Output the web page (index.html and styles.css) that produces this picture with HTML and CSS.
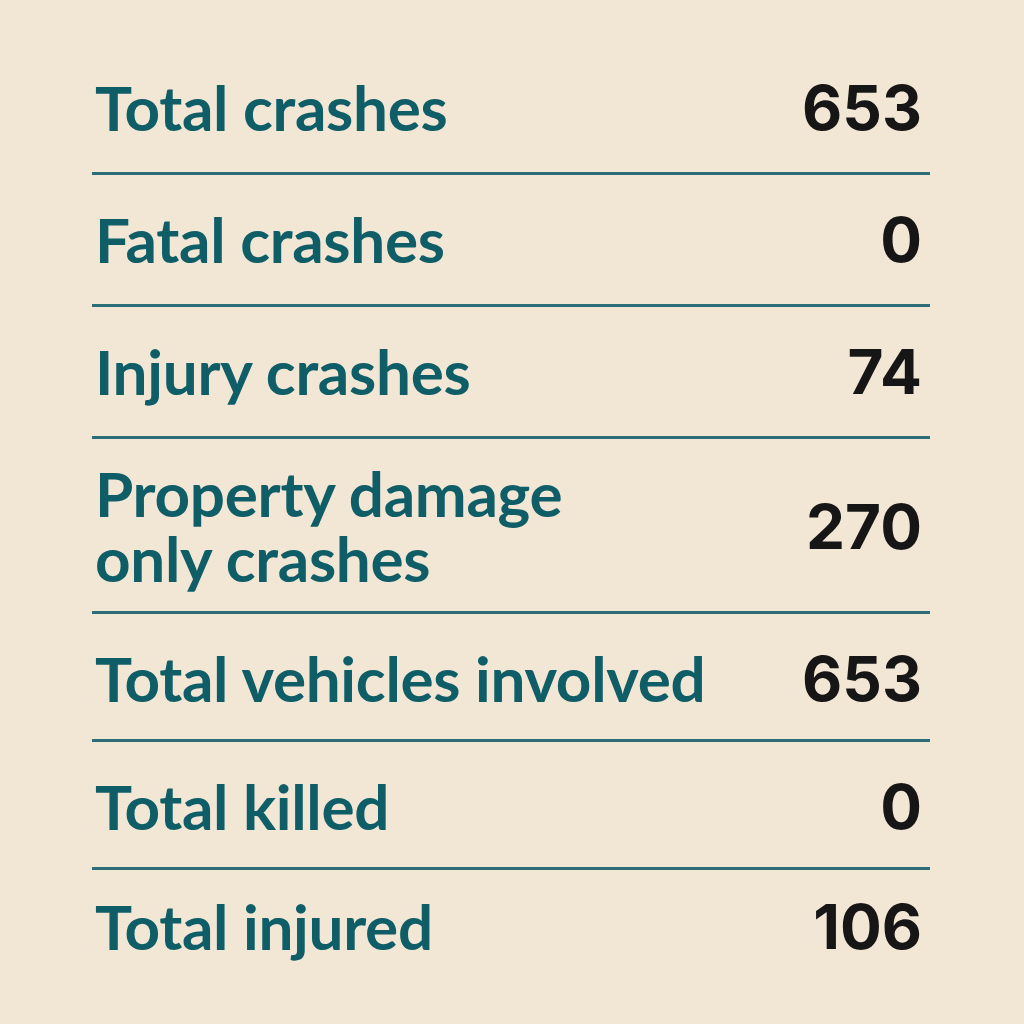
FILE: index.html
```html
<!DOCTYPE html>
<html>
<head>
<meta charset="utf-8">
<link rel="stylesheet" href="styles.css">
</head>
<body>
<div class="stats">
  <div class="row"><span class="label">Total crashes</span><span class="value">653</span></div>
  <div class="row"><span class="label">Fatal crashes</span><span class="value">0</span></div>
  <div class="row"><span class="label">Injury crashes</span><span class="value">74</span></div>
  <div class="row two"><span class="label">Property damage<br>only crashes</span><span class="value">270</span></div>
  <div class="row compact"><span class="label">Total vehicles involved</span><span class="value">653</span></div>
  <div class="row compact"><span class="label">Total killed</span><span class="value">0</span></div>
  <div class="row last"><span class="label">Total injured</span><span class="value">106</span></div>
</div>
</body>
</html>
```
FILE: styles.css
```css
html, body {
  margin: 0;
  padding: 0;
  background: #f2e6d5;
}
body {
  width: 1024px;
  height: 1024px;
  overflow: hidden;
}
.stats {
  margin: 0 94px 0 92px;
  padding-top: 65px;
}
.row {
  display: flex;
  justify-content: space-between;
  align-items: center;
  padding: 10px 8px 32px 3px;
  border-bottom: 3px solid #2b6e7a;
  margin-bottom: 22px;
}
.row.two {
  padding-top: 0;
  padding-bottom: 20px;
}
.row.compact {
  padding-bottom: 28px;
}
.row.last {
  padding-top: 2px;
  border-bottom: none;
}
.label {
  font-family: Lato, sans-serif;
  font-weight: 700;
  font-size: 62px;
  line-height: 65px;
  letter-spacing: -0.3px;
  color: #0f5e67;
}
.value {
  font-family: Inter, sans-serif;
  font-weight: 700;
  font-size: 62px;
  line-height: 65px;
  color: #161616;
}
```
